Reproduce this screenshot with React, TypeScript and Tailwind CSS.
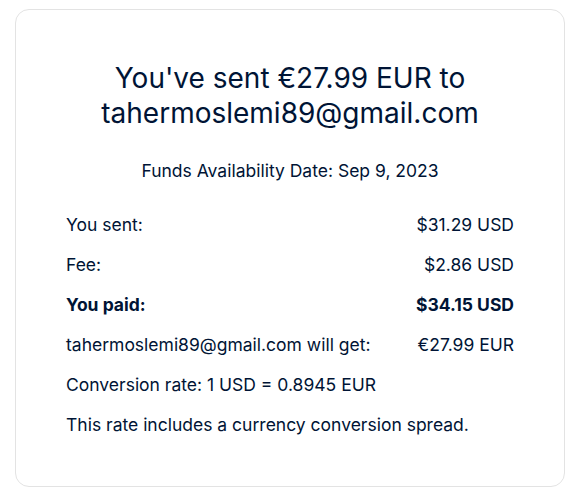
const rows = [
  { label: 'You sent:', value: '$31.29 USD' },
  { label: 'Fee:', value: '$2.86 USD' },
  { label: 'You paid:', value: '$34.15 USD', bold: true },
  { label: 'tahermoslemi89@gmail.com will get:', value: '€27.99 EUR' },
]

export default function App() {
  return (
    <div className="min-h-screen bg-white pt-[9px] pl-[15px] font-['Inter',sans-serif] text-[#001435]">
      <div className="w-[550px] h-[478px] rounded-[14px] border border-[#e3e3e3] bg-white px-[50px] pt-[51px]">
        <h1 className="text-center text-[28px] leading-[35px] font-normal">
          You've sent €27.99 EUR to tahermoslemi89@gmail.com
        </h1>
        <p className="mt-[28px] text-center text-[17.5px] leading-6">
          Funds Availability Date: Sep 9, 2023
        </p>
        <div className="mt-[30px] flex flex-col gap-4 text-[17.5px] leading-6">
          {rows.map((r) => (
            <div key={r.label} className={`flex justify-between ${r.bold ? 'font-bold' : ''}`}>
              <span>{r.label}</span>
              <span>{r.value}</span>
            </div>
          ))}
          <div>Conversion rate: 1 USD = 0.8945 EUR</div>
          <div>This rate includes a currency conversion spread.</div>
        </div>
      </div>
    </div>
  )
}
